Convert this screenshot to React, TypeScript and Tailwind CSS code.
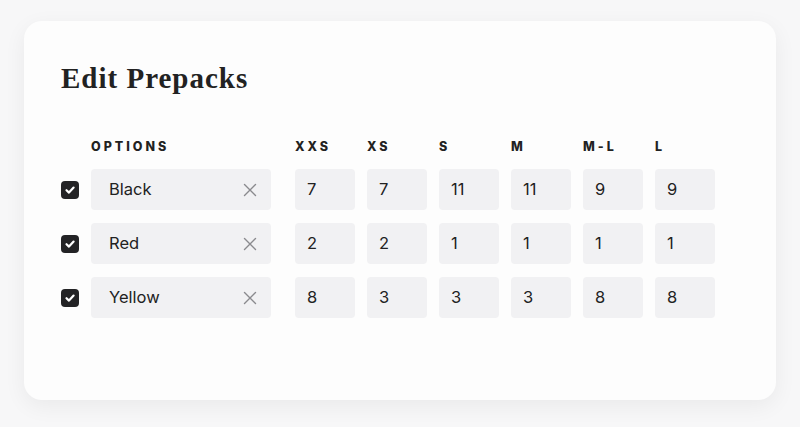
import React from "react";

const sizes = ["XXS", "XS", "S", "M", "M-L", "L"];
const rows = [
  { name: "Black", vals: [7, 7, 11, 11, 9, 9] },
  { name: "Red", vals: [2, 2, 1, 1, 1, 1] },
  { name: "Yellow", vals: [8, 3, 3, 3, 8, 8] },
];

function Check() {
  return (
    <div className="w-[18px] h-[18px] rounded-[4px] bg-[#232325] flex items-center justify-center">
      <svg width="12" height="12" viewBox="0 0 12 12">
        <path d="M2.5 6.2 L5 8.6 L9.6 3.6" fill="none" stroke="white" strokeWidth="2.2" strokeLinecap="round" strokeLinejoin="round" />
      </svg>
    </div>
  );
}

const head = "text-[12.5px] font-extrabold tracking-[3px] text-[#222] leading-[14px]";

export default function App() {
  return (
    <div className="w-[800px] h-[427px] bg-[#f7f7f8] pt-[21px] pl-[24px]" style={{ fontFamily: "Inter, 'Noto Sans', sans-serif" }}>
      <div className="w-[752px] h-[379px] bg-[#fdfdfd] rounded-[18px] shadow-[0_6px_22px_rgba(0,0,0,0.06)] pl-[37px] pt-[40px]">
        <h1 className="text-[29px] font-bold text-[#222] leading-[34px] tracking-[1px]" style={{ fontFamily: "'Liberation Serif', Georgia, serif" }}>
          Edit Prepacks
        </h1>
        <div className="mt-[45px] flex flex-col">
          <div className="flex items-center">
            <div className="w-[30px]" />
            <div className={`w-[204px] ${head}`}>OPTIONS</div>
            <div className="flex gap-[12px]">
              {sizes.map((s) => (
                <div key={s} className={`w-[60px] ${head}`}>{s}</div>
              ))}
            </div>
          </div>
          <div className="mt-[15px] flex flex-col gap-[13px]">
            {rows.map((r) => (
              <div key={r.name} className="flex items-center">
                <Check />
                <div className="ml-[12px] w-[180px] h-[41px] bg-[#f1f1f3] rounded-[4px] flex items-center justify-between pl-[18px] pr-[14px] text-[16.5px] text-[#222]">
                  <span>{r.name}</span>
                  <svg width="14" height="14" viewBox="0 0 14 14">
                    <path d="M1.5 1.5 L12.5 12.5 M12.5 1.5 L1.5 12.5" stroke="#8a8a8e" strokeWidth="1.4" strokeLinecap="round" />
                  </svg>
                </div>
                <div className="ml-[24px] flex gap-[12px]">
                  {r.vals.map((v, i) => (
                    <div key={i} className="w-[60px] h-[41px] bg-[#f1f1f3] rounded-[4px] flex items-center pl-[12px] text-[16.5px] text-[#222]">
                      {v}
                    </div>
                  ))}
                </div>
              </div>
            ))}
          </div>
        </div>
      </div>
    </div>
  );
}
